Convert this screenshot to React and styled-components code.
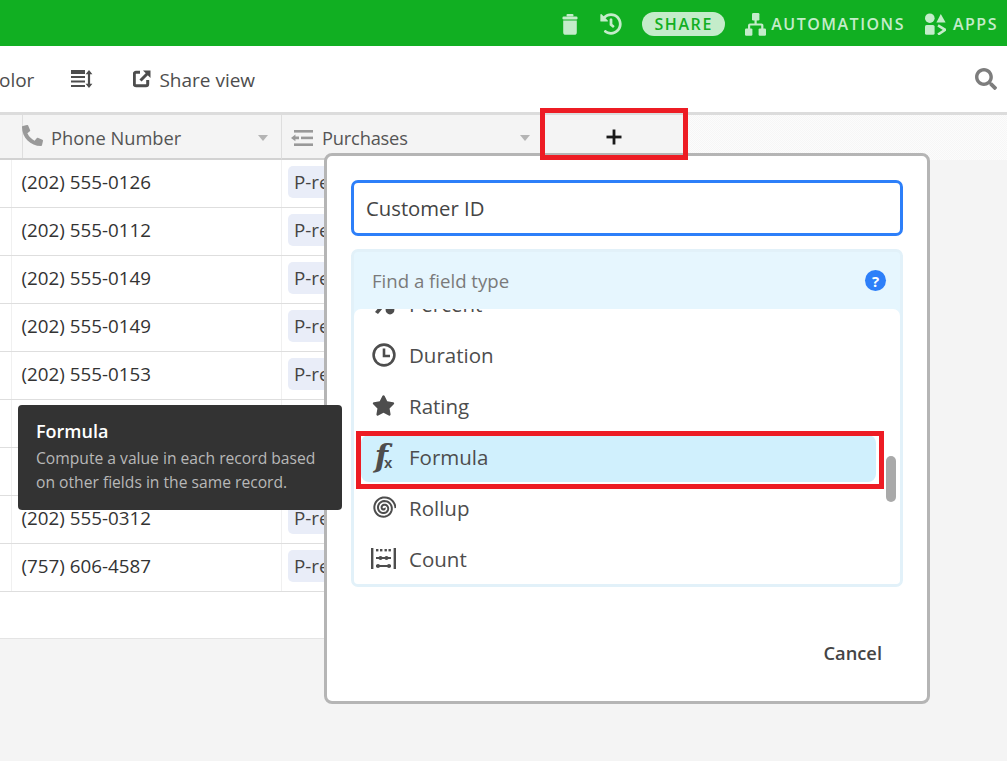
import styled, { createGlobalStyle } from "styled-components";
import { FaHistory, FaSearch, FaStar, FaPhoneAlt } from "react-icons/fa";

const GlobalStyle = createGlobalStyle`
  html, body {
    margin: 0;
    padding: 0;
    height: 100%;
    overflow: hidden;
    background: #f4f4f4;
    font-family: "Open Sans", "Noto Sans", sans-serif;
    color: #444;
  }
`;

const Page = styled.div`
  position: relative;
  width: 1007px;
  height: 761px;
  overflow: hidden;
  background: #f4f4f4;
`;

const TopBar = styled.header`
  display: flex;
  align-items: center;
  justify-content: flex-end;
  height: 46px;
  padding: 2px 9px 0 0;
  box-sizing: border-box;
  background: #11af22;
  color: #c4ecca;
`;

const TopIcon = styled.span`
  display: flex;
  align-items: center;
  margin-right: ${(p) => p.$gap}px;
`;

const SharePill = styled.span`
  display: flex;
  align-items: center;
  justify-content: center;
  width: 83px;
  height: 24px;
  margin-right: 20px;
  border-radius: 12px;
  background: #c4ecca;
  color: #11af22;
  font-size: 16px;
  font-weight: 600;
  letter-spacing: 1.6px;
`;

const TopLabel = styled.span`
  font-size: 16px;
  font-weight: 600;
  letter-spacing: 1.5px;
  margin-right: ${(p) => p.$gap || 0}px;
`;

const Toolbar = styled.div`
  display: flex;
  align-items: center;
  height: 66px;
  padding-right: 10px;
  background: #fff;
  border-bottom: 3px solid #dcdcdc;
  color: #4d4d4d;
  font-size: 19px;
  font-weight: 500;
`;

const ClippedLabel = styled.span`
  margin: 1px 37px 0 -13px;
`;

const ToolButton = styled.span`
  display: flex;
  align-items: center;
  gap: 8px;
  margin-right: ${(p) => p.$gap || 0}px;
`;

const ToolLabel = styled.span`
  margin-top: 1px;
`;

const Spacer = styled.div`
  flex: 1;
`;

const HeaderRow = styled.div`
  display: grid;
  grid-template-columns: 12px 270px 260px 146px 1fr;
  height: 45px;
  box-sizing: border-box;
  background: #f4f4f4;
  color: #555;
  font-size: 18.3px;
`;

const HeaderCell = styled.div`
  display: flex;
  align-items: center;
  gap: ${(p) => p.$gap || 9}px;
  padding: 2px ${(p) => p.$right || 13}px 0 9px;
  border-right: 1px solid #dedede;
  border-bottom: 2px solid #d2d2d2;
`;

const HeaderLabel = styled.span`
  flex: 1;
  letter-spacing: ${(p) => p.$tight || 0}px;
`;

const PhoneGlyph = styled(FaPhoneAlt)`
  margin: -4px 0 0 1px;
`;

const Caret = styled.span`
  width: 0;
  height: 0;
  border-left: 5px solid transparent;
  border-right: 5px solid transparent;
  border-top: 6px solid #b4b4b4;
`;

const AddColumn = styled.div`
  display: flex;
  align-items: center;
  justify-content: center;
  background: #f4f4f4;
  padding: 0 3px 2px 0;
`;

const Hatch = styled.div`
  background-image: conic-gradient(#f6f6f6 25%, #fcfcfc 0 50%, #f6f6f6 0 75%, #fcfcfc 0);
  background-size: 2px 2px;
`;

const Rows = styled.div`
  width: 542px;
  background: #fff;
  padding-bottom: 46px;
  border-bottom: 1px solid #e4e4e4;
`;

const Row = styled.div`
  display: grid;
  grid-template-columns: 12px 270px 1fr;
  height: 48px;
  box-sizing: border-box;
  border-bottom: 1px solid #dedede;
  color: #333;
  font-size: 18.8px;
`;

const Cell = styled.div`
  display: flex;
  align-items: center;
  overflow: hidden;
  white-space: nowrap;
  padding: 0 0 3px ${(p) => p.$pad || 0}px;
  border-right: 1px solid #f0f0f0;
`;

const Chip = styled.span`
  display: flex;
  align-items: center;
  height: 32px;
  padding: 0 6px;
  border-radius: 5px;
  background: #e9edf8;
  color: #444;
`;

const Popup = styled.div`
  position: absolute;
  left: 324px;
  top: 153px;
  width: 606px;
  height: 551px;
  box-sizing: border-box;
  padding: 24px 24px 0;
  background: #fff;
  border: 3px solid #b5b5b5;
  border-radius: 8px;
  display: flex;
  flex-direction: column;
`;

const NameInput = styled.div`
  display: flex;
  align-items: center;
  height: 56px;
  box-sizing: border-box;
  padding-left: 12px;
  border: 3px solid #2d7ff9;
  border-radius: 7px;
  color: #444;
  font-size: 20.3px;
`;

const TypePanel = styled.div`
  position: relative;
  margin-top: 13px;
  height: 338px;
  box-sizing: border-box;
  background: #e6f6fe;
  border: 3px solid #e2f1f9;
  border-radius: 7px;
  display: flex;
  flex-direction: column;
  overflow: hidden;
`;

const SearchRow = styled.div`
  display: flex;
  align-items: center;
  justify-content: space-between;
  flex: 0 0 57px;
  padding: 0 14px 0 18px;
  box-sizing: border-box;
  color: #7a7a7a;
  font-size: 18.6px;
`;

const HelpBadge = styled.span`
  display: flex;
  align-items: center;
  justify-content: center;
  width: 21px;
  height: 21px;
  border-radius: 50%;
  background: #2d7ff9;
  color: #fff;
  font-size: 15px;
  font-weight: 700;
`;

const TypeList = styled.div`
  flex: 1;
  background: #fff;
  border-radius: 7px 7px 0 0;
  overflow: hidden;
`;

const TypeItem = styled.div`
  display: flex;
  align-items: center;
  box-sizing: border-box;
  height: ${(p) => (p.$active ? 47 : 51)}px;
  margin: ${(p) => (p.$active ? "2px 24px 2px 7px" : "0 24px 0 7px")};
  padding: 0 0 4px 10px;
  border-radius: 8px;
  background: ${(p) => (p.$active ? "#d0f0fd" : "transparent")};
  color: #4d4d4d;
  font-size: 20.5px;
  font-weight: 500;
  &:first-child {
    margin-top: -29px;
  }
`;

const TypeIcon = styled.span`
  display: flex;
  align-items: center;
  justify-content: center;
  width: 25px;
  margin-right: 13px;
  color: #4d4d4d;
`;

const FormulaF = styled.span`
  font-family: "DejaVu Serif", serif;
  font-style: italic;
  font-weight: 700;
  font-size: 31px;
  line-height: 1;
  margin-left: -3px;
`;

const FormulaX = styled.span`
  font-family: "Liberation Sans", sans-serif;
  font-weight: 700;
  font-size: 15px;
  line-height: 1;
  margin: 12px -3px 0 -4px;
`;

const Scrollbar = styled.div`
  position: absolute;
  right: 4px;
  top: 204px;
  width: 10px;
  height: 46px;
  border-radius: 5px;
  background: #a9a9a9;
`;

const Actions = styled.div`
  display: flex;
  justify-content: flex-end;
  padding: 53px 21px 0 0;
`;

const CancelButton = styled.span`
  color: #444;
  font-size: 18.3px;
  font-weight: 600;
`;

const Tooltip = styled.div`
  position: absolute;
  left: 18px;
  top: 405px;
  width: 324px;
  height: 105px;
  box-sizing: border-box;
  padding: 13px 18px;
  border-radius: 4px;
  background: #333;
`;

const TooltipTitle = styled.div`
  color: #fff;
  font-size: 18px;
  font-weight: 600;
  line-height: 26px;
  margin-bottom: 2px;
`;

const TooltipBody = styled.div`
  color: #b8b8b8;
  font-size: 15.65px;
  line-height: 24px;
`;

const RedBox = styled.div`
  position: absolute;
  left: ${(p) => p.$x}px;
  top: ${(p) => p.$y}px;
  width: ${(p) => p.$w}px;
  height: ${(p) => p.$h}px;
  box-sizing: border-box;
  border: 5px solid #ed1c24;
`;

const TrashIcon = () => (
  <svg width="16" height="21" viewBox="0 0 16 21" fill="currentColor">
    <rect x="4.5" y="0" width="7" height="2.4" rx="1" />
    <rect x="0.5" y="2.4" width="15" height="3" rx="1.2" />
    <path d="M1.2 6.6h13.6v11.6a2.6 2.6 0 0 1-2.6 2.6H3.8a2.6 2.6 0 0 1-2.6-2.6z" />
  </svg>
);

const AutomationsIcon = () => (
  <svg width="21" height="23" viewBox="0 0 21 23" fill="currentColor">
    <rect x="7" y="0" width="7.4" height="7.4" rx="1.2" />
    <rect x="0" y="15.4" width="7.4" height="7.4" rx="1.2" />
    <rect x="13.6" y="15.4" width="7.4" height="7.4" rx="1.2" />
    <path d="M9.5 7h2.2v3.4h4.7a2 2 0 0 1 2 2V16h-2.2v-3.4H5.2V16H3v-3.6a2 2 0 0 1 2-2h4.5z" />
  </svg>
);

const AppsIcon = () => (
  <svg width="21" height="22" viewBox="0 0 21 22" fill="currentColor">
    <circle cx="4.8" cy="5.2" r="4.8" />
    <path d="M11.4 9.6L15.8 1l4.8 8.6z" />
    <rect x="0" y="12" width="9.6" height="9.8" rx="1.6" />
    <path d="M13 12.4l7.2 4.4-7.2 4.8" fill="none" stroke="currentColor" strokeWidth="2.6" />
  </svg>
);

const SortIcon = () => (
  <svg width="22" height="19" viewBox="0 0 22 19" fill="currentColor">
    <rect x="0" y="0" width="14" height="4" />
    <rect x="0" y="6" width="14" height="2" />
    <rect x="0" y="10.5" width="14" height="2" />
    <rect x="0" y="15" width="14" height="2" />
    <path d="M18 0l3.4 4.2h-2.3v9.6h2.3L18 18l-3.4-4.2h2.3V4.2h-2.3z" />
  </svg>
);

const ShareViewIcon = () => (
  <svg width="18" height="18" viewBox="0 0 18 18" fill="none" stroke="currentColor" strokeWidth="3">
    <path d="M7 2.3H3a1.7 1.7 0 0 0-1.7 1.7v10A1.7 1.7 0 0 0 3 15.7h10a1.7 1.7 0 0 0 1.7-1.7v-4" />
    <path d="M7.5 10.5L15 3" />
    <path d="M10 0.5h7.5V8z" fill="currentColor" stroke="none" />
  </svg>
);

const PurchasesIcon = () => (
  <svg width="22" height="18" viewBox="0 0 22 18" fill="#999">
    <rect x="3" y="1" width="19" height="2.6" />
    <rect x="10" y="7.6" width="12" height="2.6" />
    <path d="M0 8.9L4.4 5.6v2h3.6v2.6H4.4v2z" />
    <rect x="3" y="14.4" width="19" height="2.6" />
  </svg>
);

const PlusIcon = () => (
  <svg width="16" height="16" viewBox="0 0 16 16" fill="#1a1a1a">
    <rect x="0.5" y="6.6" width="15" height="2.8" />
    <rect x="6.6" y="0.5" width="2.8" height="15" />
  </svg>
);

const ClockIcon = () => (
  <svg width="24" height="24" viewBox="0 0 24 24" fill="none" stroke="currentColor" strokeWidth="2.6">
    <circle cx="12" cy="12" r="10.4" />
    <path d="M12 5.5V13h6" />
  </svg>
);

const PercentIcon = () => (
  <svg width="24" height="24" viewBox="0 0 24 24" fill="currentColor">
    <circle cx="6" cy="6" r="4.4" />
    <circle cx="18" cy="18" r="4.4" />
    <path d="M18 2l3 2L6 22l-3-2z" />
  </svg>
);

// three turns of an archimedean spiral, drawn out from the centre
const spiralPoints = Array.from({ length: 90 }, (_, i) => {
  const turn = (i / 89) * Math.PI * 6;
  const r = 0.5 + (i / 89) * 11;
  return `${(12 + r * Math.cos(turn)).toFixed(2)},${(12 + r * Math.sin(turn)).toFixed(2)}`;
}).join(" ");

const RollupIcon = () => (
  <svg width="24" height="24" viewBox="0 0 24 24" fill="none" stroke="currentColor" strokeWidth="2">
    <polyline points={spiralPoints} />
  </svg>
);

const CountIcon = () => (
  <svg width="25" height="21" viewBox="0 0 25 21" fill="currentColor">
    <rect x="0" y="0" width="2.4" height="21" />
    <rect x="22.6" y="0" width="2.4" height="21" />
    <rect x="5" y="1" width="2.4" height="2.4" />
    <rect x="9" y="1" width="2.4" height="2.4" />
    <rect x="13.5" y="1" width="2.4" height="2.4" />
    <rect x="17.5" y="1" width="2.4" height="2.4" />
    <rect x="5" y="9" width="15" height="2" />
    <circle cx="9.5" cy="10" r="2" />
    <circle cx="15.5" cy="10" r="2" />
    <rect x="5" y="17" width="15" height="2" />
    <circle cx="7" cy="18" r="2" />
    <circle cx="18" cy="18" r="2" />
  </svg>
);

const phones = [
  "(202) 555-0126",
  "(202) 555-0112",
  "(202) 555-0149",
  "(202) 555-0149",
  "(202) 555-0153",
  "(202) 555-0171",
  "(202) 555-0188",
  "(202) 555-0312",
  "(757) 606-4587",
];

const App = () => (
  <Page>
    <GlobalStyle />
    <TopBar>
      <TopIcon $gap={22}>
        <TrashIcon />
      </TopIcon>
      <TopIcon $gap={20}>
        <FaHistory size={22} />
      </TopIcon>
      <SharePill>SHARE</SharePill>
      <TopIcon $gap={5}>
        <AutomationsIcon />
      </TopIcon>
      <TopLabel $gap={20}>AUTOMATIONS</TopLabel>
      <TopIcon $gap={7}>
        <AppsIcon />
      </TopIcon>
      <TopLabel>APPS</TopLabel>
    </TopBar>

    <Toolbar>
      <ClippedLabel>Color</ClippedLabel>
      <ToolButton $gap={40}>
        <SortIcon />
      </ToolButton>
      <ToolButton>
        <ShareViewIcon />
        <ToolLabel>Share view</ToolLabel>
      </ToolButton>
      <Spacer />
      <FaSearch size={22} color="#7d7d7d" />
    </Toolbar>

    <HeaderRow>
      <HeaderCell />
      <HeaderCell $gap={8}>
        <PhoneGlyph size={21} color="#999" />
        <HeaderLabel>Phone Number</HeaderLabel>
        <Caret />
      </HeaderCell>
      <HeaderCell $right={11}>
        <PurchasesIcon />
        <HeaderLabel $tight={-0.2}>Purchases</HeaderLabel>
        <Caret />
      </HeaderCell>
      <AddColumn>
        <PlusIcon />
      </AddColumn>
      <Hatch />
    </HeaderRow>

    <Rows>
      {phones.map((phone, i) => (
        <Row key={i}>
          <Cell />
          <Cell $pad={9.5}>{phone}</Cell>
          <Cell $pad={6}>
            <Chip>P-rec{i}</Chip>
          </Cell>
        </Row>
      ))}
    </Rows>

    <Popup>
      <NameInput>Customer ID</NameInput>
      <TypePanel>
        <SearchRow>
          Find a field type
          <HelpBadge>?</HelpBadge>
        </SearchRow>
        <TypeList>
          <TypeItem>
            <TypeIcon>
              <PercentIcon />
            </TypeIcon>
            Percent
          </TypeItem>
          <TypeItem>
            <TypeIcon>
              <ClockIcon />
            </TypeIcon>
            Duration
          </TypeItem>
          <TypeItem>
            <TypeIcon>
              <FaStar size={23} />
            </TypeIcon>
            Rating
          </TypeItem>
          <TypeItem $active>
            <TypeIcon>
              <FormulaF>f</FormulaF>
              <FormulaX>x</FormulaX>
            </TypeIcon>
            Formula
          </TypeItem>
          <TypeItem>
            <TypeIcon>
              <RollupIcon />
            </TypeIcon>
            Rollup
          </TypeItem>
          <TypeItem>
            <TypeIcon>
              <CountIcon />
            </TypeIcon>
            Count
          </TypeItem>
        </TypeList>
        <Scrollbar />
      </TypePanel>
      <Actions>
        <CancelButton>Cancel</CancelButton>
      </Actions>
    </Popup>

    <Tooltip>
      <TooltipTitle>Formula</TooltipTitle>
      <TooltipBody>
        Compute a value in each record based
        <br />
        on other fields in the same record.
      </TooltipBody>
    </Tooltip>

    <RedBox $x={540} $y={108} $w={148} $h={52} />
    <RedBox $x={356} $y={431} $w={528} $h={58} />
  </Page>
);

export default App;
